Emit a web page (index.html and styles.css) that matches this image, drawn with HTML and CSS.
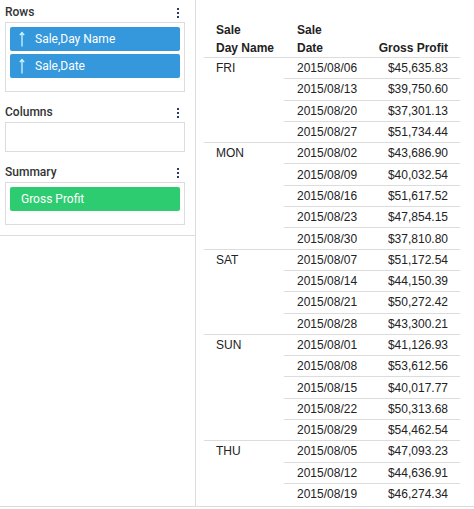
FILE: index.html
```html
<!DOCTYPE html>
<html>
<head>
<meta charset="utf-8">
<link rel="stylesheet" href="styles.css">
</head>
<body>
<div class="app">
  <div class="side">
    <div class="panel">
      <div class="section">
        <div class="label-row"><span class="label">Rows</span><span class="dots"><i></i><i></i><i></i></span></div>
        <div class="box">
          <div class="chip blue"><svg class="arrow" width="8" height="16" viewBox="0 0 8 16"><path d="M4 15.5V1.5M1.8 4.2L4 1.5L6.2 4.2" fill="none" stroke="#cdf6ff" stroke-width="1.3"/></svg><span>Sale,Day Name</span></div>
          <div class="chip blue"><svg class="arrow" width="8" height="16" viewBox="0 0 8 16"><path d="M4 15.5V1.5M1.8 4.2L4 1.5L6.2 4.2" fill="none" stroke="#cdf6ff" stroke-width="1.3"/></svg><span>Sale,Date</span></div>
        </div>
      </div>
      <div class="section">
        <div class="label-row"><span class="label">Columns</span><span class="dots"><i></i><i></i><i></i></span></div>
        <div class="box empty"></div>
      </div>
      <div class="section">
        <div class="label-row"><span class="label">Summary</span><span class="dots"><i></i><i></i><i></i></span></div>
        <div class="box">
          <div class="chip green"><span>Gross Profit</span></div>
        </div>
      </div>
    </div>
  </div>
  <div class="main">
    <div class="thead">
      <div class="c1">Sale<br>Day Name</div>
      <div class="c2">Sale<br>Date</div>
      <div class="c3">Gross Profit</div>
    </div>
    <div class="group"><div class="day">FRI</div><div class="rows">
      <div class="row"><span class="c2">2015/08/06</span><span class="c3">$45,635.83</span></div>
      <div class="row"><span class="c2">2015/08/13</span><span class="c3">$39,750.60</span></div>
      <div class="row"><span class="c2">2015/08/20</span><span class="c3">$37,301.13</span></div>
      <div class="row"><span class="c2">2015/08/27</span><span class="c3">$51,734.44</span></div>
    </div></div>
    <div class="group"><div class="day">MON</div><div class="rows">
      <div class="row"><span class="c2">2015/08/02</span><span class="c3">$43,686.90</span></div>
      <div class="row"><span class="c2">2015/08/09</span><span class="c3">$40,032.54</span></div>
      <div class="row"><span class="c2">2015/08/16</span><span class="c3">$51,617.52</span></div>
      <div class="row"><span class="c2">2015/08/23</span><span class="c3">$47,854.15</span></div>
      <div class="row"><span class="c2">2015/08/30</span><span class="c3">$37,810.80</span></div>
    </div></div>
    <div class="group"><div class="day">SAT</div><div class="rows">
      <div class="row"><span class="c2">2015/08/07</span><span class="c3">$51,172.54</span></div>
      <div class="row"><span class="c2">2015/08/14</span><span class="c3">$44,150.39</span></div>
      <div class="row"><span class="c2">2015/08/21</span><span class="c3">$50,272.42</span></div>
      <div class="row"><span class="c2">2015/08/28</span><span class="c3">$43,300.21</span></div>
    </div></div>
    <div class="group"><div class="day">SUN</div><div class="rows">
      <div class="row"><span class="c2">2015/08/01</span><span class="c3">$41,126.93</span></div>
      <div class="row"><span class="c2">2015/08/08</span><span class="c3">$53,612.56</span></div>
      <div class="row"><span class="c2">2015/08/15</span><span class="c3">$40,017.77</span></div>
      <div class="row"><span class="c2">2015/08/22</span><span class="c3">$50,313.68</span></div>
      <div class="row"><span class="c2">2015/08/29</span><span class="c3">$54,462.54</span></div>
    </div></div>
    <div class="group"><div class="day">THU</div><div class="rows">
      <div class="row"><span class="c2">2015/08/05</span><span class="c3">$47,093.23</span></div>
      <div class="row"><span class="c2">2015/08/12</span><span class="c3">$44,636.91</span></div>
      <div class="row"><span class="c2">2015/08/19</span><span class="c3">$46,274.34</span></div>
    </div></div>
  </div>
</div>
</body>
</html>
```
FILE: styles.css
```css
html, body { margin: 0; padding: 0; background: #fff; }
body { width: 474px; height: 509px; overflow: hidden; }

.app {
  display: flex;
  height: 507px;
  box-sizing: border-box;
  border-bottom: 1px solid #dcdcdc;
  overflow: hidden;
}

.side {
  width: 196px;
  flex: none;
  box-sizing: border-box;
  border-right: 1px solid #dcdcdc;
}

.panel {
  border-bottom: 1px solid #dcdcdc;
  padding: 0 10px 10px 5px;
  font-family: Roboto, "Liberation Sans", sans-serif;
}

.section + .section { margin-top: 8px; }

.label-row {
  display: flex;
  align-items: center;
  justify-content: space-between;
  height: 22px;
}

.label {
  font-size: 12px;
  font-weight: 500;
  color: #333;
  margin-top: 2px;
}

.dots {
  display: flex;
  flex-direction: column;
  gap: 2px;
  margin-right: 6px;
  margin-top: 3px;
}
.dots i {
  display: block;
  width: 2px;
  height: 2px;
  background: #2b3a67;
}

.box {
  border: 1px solid #dcdcdc;
  padding: 4px 4px 13px 4px;
  display: flex;
  flex-direction: column;
  gap: 3px;
}
.box.empty { height: 30px; box-sizing: border-box; padding: 0; }

.chip {
  height: 24px;
  border-radius: 2px;
  display: flex;
  align-items: center;
  color: #fff;
  font-size: 12px;
}
.chip.blue { background: #3598dc; padding-left: 8px; }
.chip.green { background: #2ecc71; padding-left: 11px; }
.arrow { margin-right: 9px; }

.main {
  flex: 1;
  padding: 21px 14px 0 8px;
  font-family: "Liberation Sans", Arial, sans-serif;
  font-size: 12px;
  color: #222;
}

.thead {
  display: flex;
  align-items: flex-end;
  font-weight: bold;
  line-height: 18px;
}

.c1 { width: 80px; box-sizing: border-box; padding-left: 12px; flex: none; }
.c2 { width: 90px; box-sizing: border-box; padding-left: 13px; flex: none; }
.c3 { flex: 1; text-align: right; padding-right: 12px; }

.group { display: flex; }
.day {
  width: 80px;
  flex: none;
  box-sizing: border-box;
  padding-left: 12px;
  border-top: 1px solid #dcdcdc;
  height: 21.3px;
  line-height: 20px;
}
.rows { flex: 1; }
.row {
  display: flex;
  align-items: center;
  height: 21.3px;
  box-sizing: border-box;
  border-top: 1px solid #dcdcdc;
}
```
